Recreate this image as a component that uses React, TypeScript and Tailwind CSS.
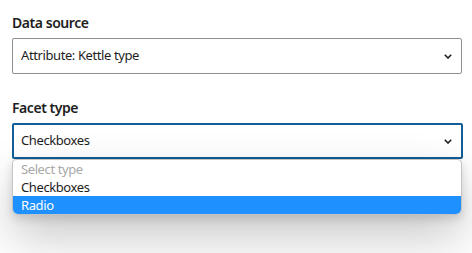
import { useState } from "react";

const FONT = "font-['Noto_Sans','Open_Sans',sans-serif]";

function Chevron() {
  return (
    <svg width="8" height="5" viewBox="0 0 8 5" className="shrink-0">
      <path d="M0.8 0.8l3.2 3.2 3.2-3.2" fill="none" stroke="#1e1e1e" strokeWidth="1.6" />
    </svg>
  );
}

export default function App() {
  const [facet] = useState("Checkboxes");
  const options = ["Select type", "Checkboxes", "Radio"];

  return (
    <div className={`w-[472px] h-[253px] bg-white overflow-hidden ${FONT} text-[#1e1e1e]`}>
      <div className="flex flex-col px-3 pt-[13px]">
        <label className="text-[14px] font-semibold leading-5 tracking-[-0.45px]">Data source</label>
        <div className="mt-[5px] h-9 w-[450px] flex items-center justify-between border border-[#8c8f94] rounded-[2px] pl-2 pr-[9px] text-[13px] tracking-[-0.4px]">
          <span>Attribute: Kettle type</span>
          <Chevron />
        </div>

        <label className="mt-[24px] text-[14px] font-semibold leading-5 tracking-[-0.45px]">Facet type</label>
        <div className="relative mt-[5px]">
          <div className="h-9 w-[451px] flex items-center justify-between border-2 border-[#135e96] rounded-[2px] pl-[7px] pr-[9px] text-[13px] tracking-[-0.4px]">
            <span>{facet}</span>
            <Chevron />
          </div>
          <ul className="absolute left-0 top-[36px] w-[450px] bg-white border border-[#c4c4c4] rounded-b-[6px] rounded-t-[4px] overflow-hidden shadow-[0_4px_10px_rgba(0,0,0,0.14),0_22px_48px_rgba(0,0,0,0.22)] text-[13px] leading-[18px] tracking-[-0.4px]">
            {options.map((o, i) => (
              <li
                key={o}
                className={`pl-2 h-[18px] ${
                  i === 0 ? "text-[#a8a8a8]" : i === 2 ? "bg-[#1e90ff] text-white" : "text-[#1e1e1e]"
                }`}
              >
                {o}
              </li>
            ))}
          </ul>
        </div>
      </div>
    </div>
  );
}
